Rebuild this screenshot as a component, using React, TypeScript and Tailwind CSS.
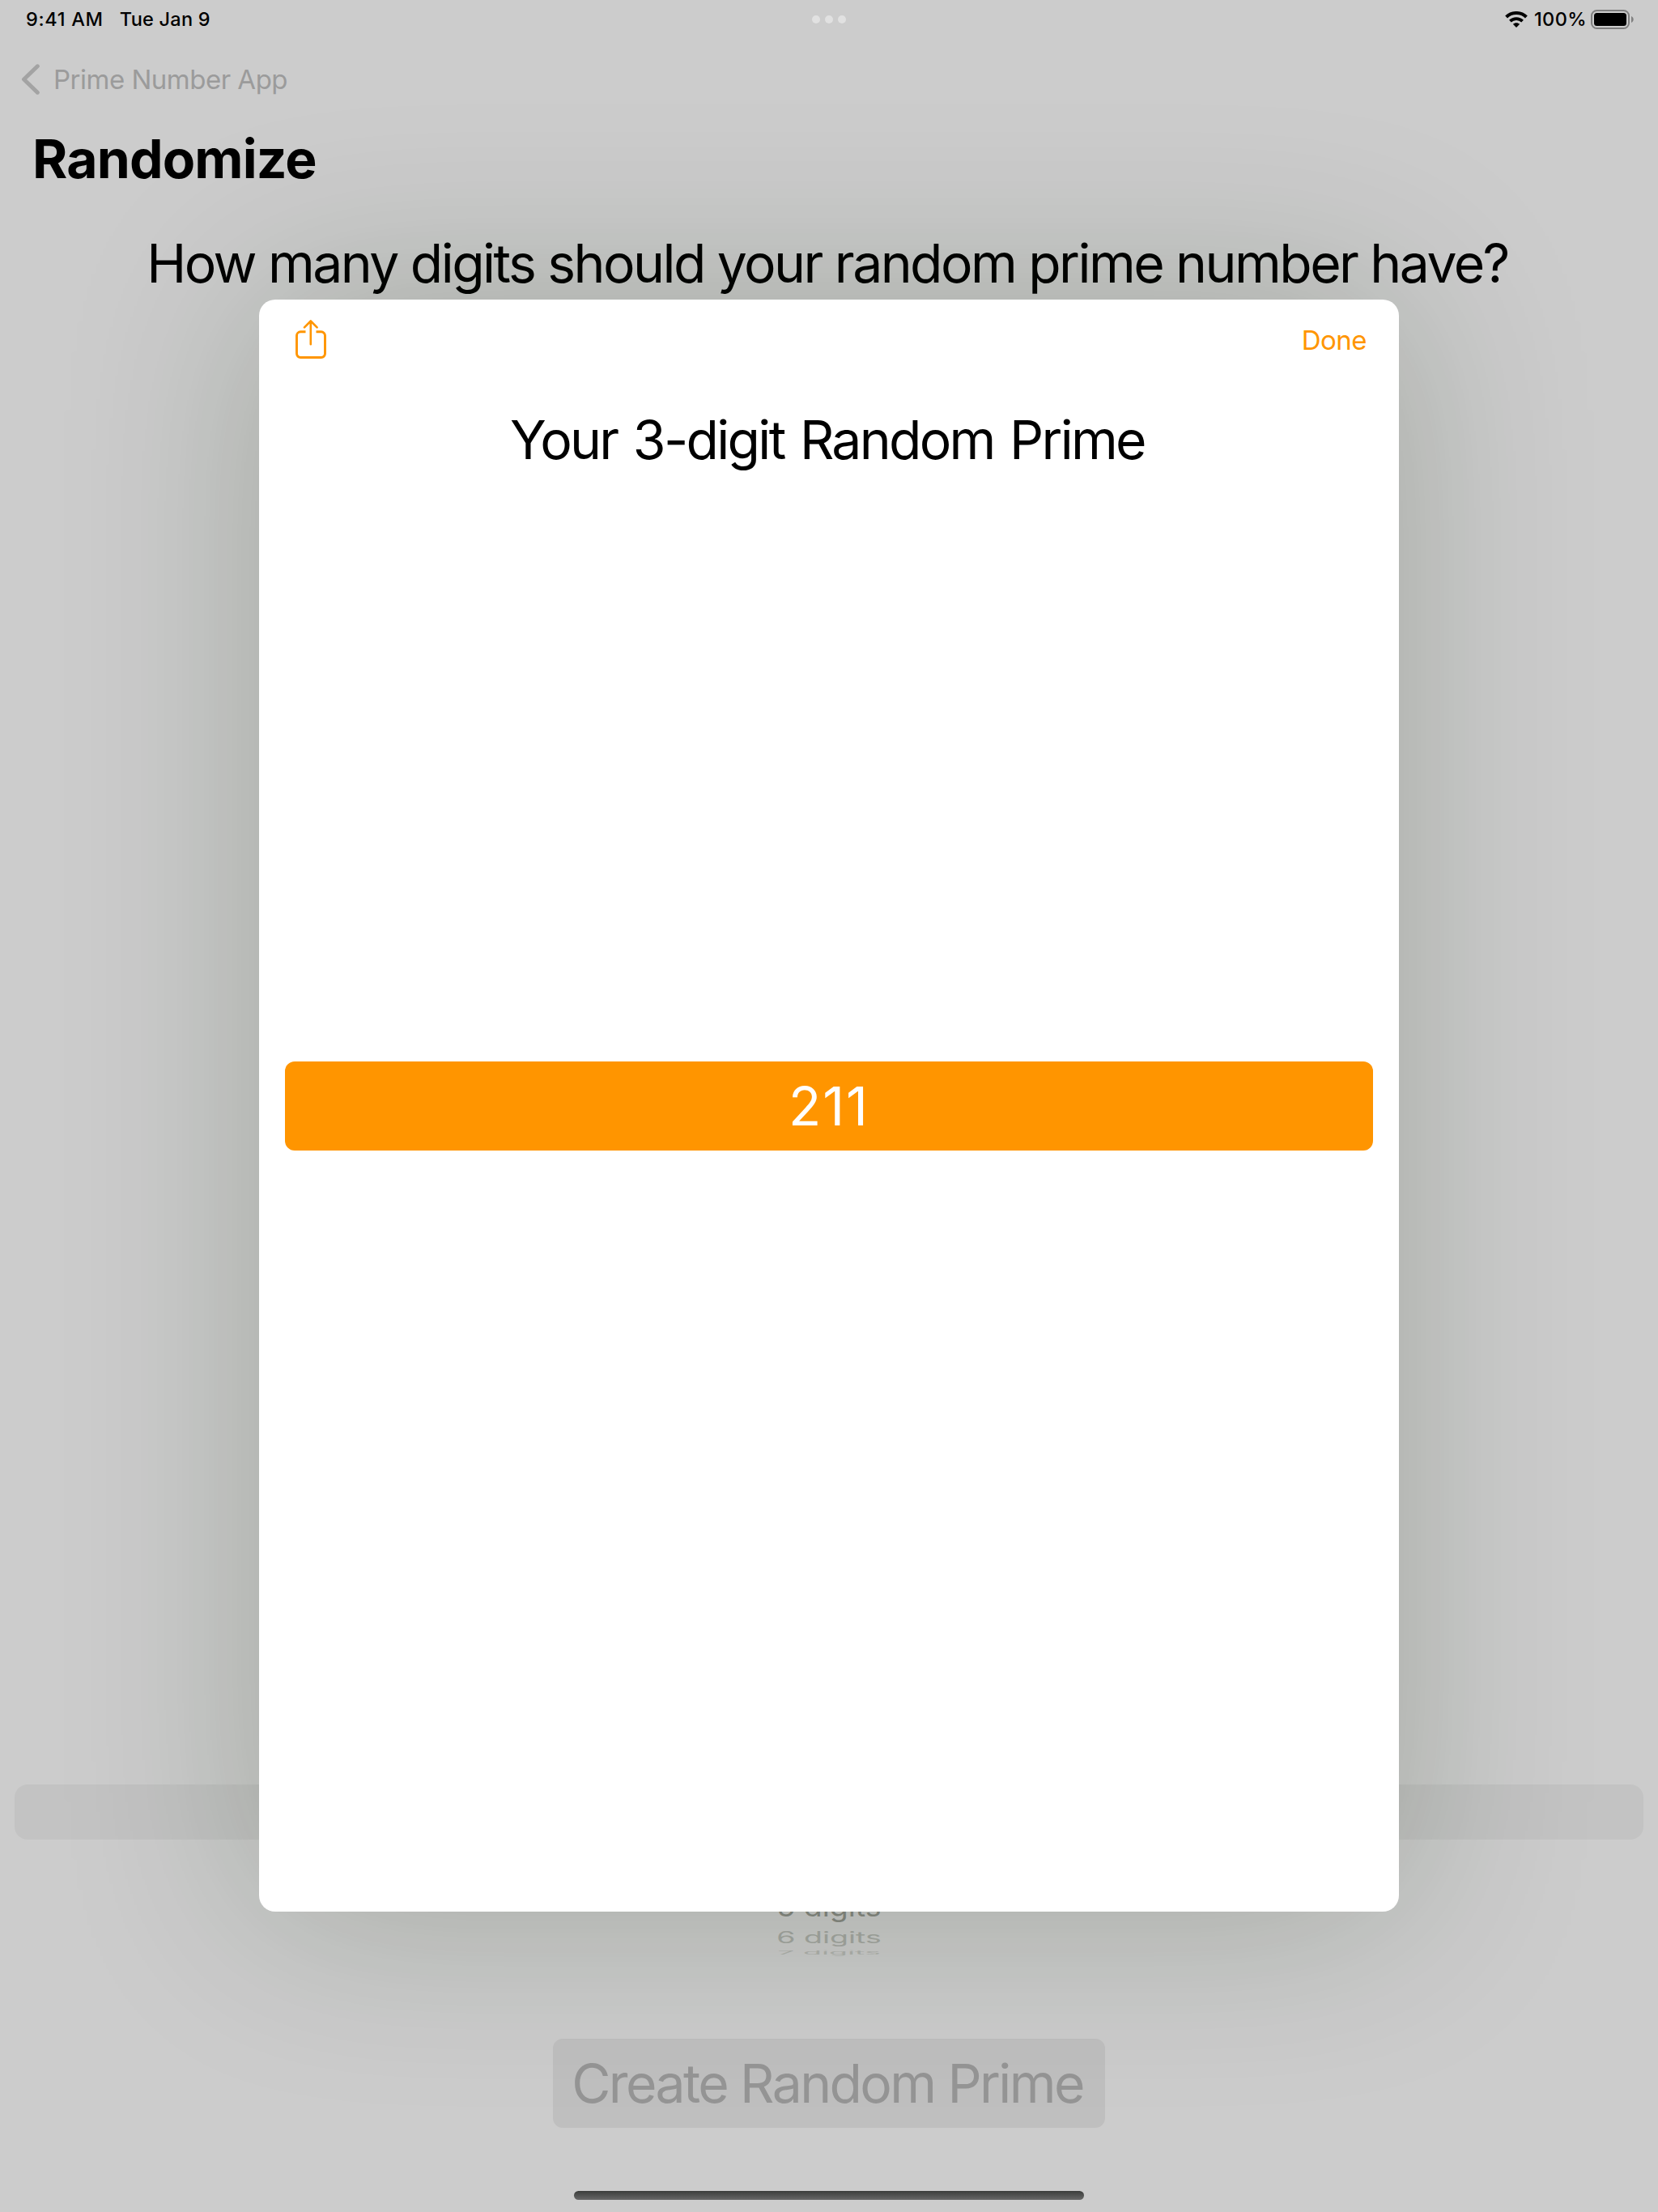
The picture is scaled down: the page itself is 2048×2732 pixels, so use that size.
function StatusBar() {
  return (
    <div className="grid h-[47px] grid-cols-3 items-center px-[30px] text-[23.5px] font-medium leading-none">
      <div className="flex items-center gap-[20px] pl-[2px]">
        <span className="tracking-[0.7px]">9:41 AM</span>
        <span className="tracking-[0.25px]">Tue Jan 9</span>
      </div>
      <div className="flex justify-center gap-[6px]">
        <i className="size-[10px] rounded-full bg-[#e1e1e1]" />
        <i className="size-[10px] rounded-full bg-[#e1e1e1]" />
        <i className="size-[10px] rounded-full bg-[#e1e1e1]" />
      </div>
      <div className="flex items-center justify-end">
        <svg width="28" height="20" viewBox="0 0 28 20" className="mr-[8px]">
          <path d="M1.6 7C8.3 0.3 19.7 0.3 26.4 7" fill="none" stroke="#000" strokeWidth="4" />
          <path d="M6.4 12.1C10.6 8 17.4 8 21.6 12.1" fill="none" stroke="#000" strokeWidth="3.8" />
          <path d="M14 20l-4.2-4.2c2.3-2.1 6.1-2.1 8.4 0z" />
        </svg>
        <span className="tracking-[0.4px]">100%</span>
        <svg width="53" height="24" viewBox="0 0 53 24" className="ml-[5px]">
          <rect x="1" y="1" width="46" height="22" rx="6.5" fill="none" stroke="#7f7f7f" strokeWidth="2" />
          <rect x="4" y="4" width="40" height="16" rx="3.5" />
          <path d="M50 8c3.6 1.4 3.6 6.6 0 8z" fill="#7f7f7f" />
        </svg>
      </div>
    </div>
  );
}

function ResultSheet() {
  return (
    <section className="absolute left-[320px] top-[370px] flex h-[1991px] w-[1408px] flex-col rounded-[20px] bg-white shadow-[0_0_240px_rgba(12,38,6,0.22)]">
      <header className="flex h-[100px] items-center justify-between pl-[45px] pr-[40px] text-[#ff9500]">
        <svg width="38" height="48" viewBox="0 0 38 48" className="mb-[2px]" fill="none" stroke="currentColor" strokeWidth="2.9" strokeLinecap="round" strokeLinejoin="round">
          <path d="M12.5 14.8H6.2a4.7 4.7 0 0 0-4.7 4.7v22.3a4.7 4.7 0 0 0 4.7 4.7h25.6a4.7 4.7 0 0 0 4.7-4.7V19.5a4.7 4.7 0 0 0-4.7-4.7h-6.3" strokeLinecap="butt" />
          <path d="M18.8 1.8v28.4M11 9.3l7.8-7.8 7.8 7.8" strokeWidth="2.6" />
        </svg>
        <button className="text-[33px] leading-none tracking-[-0.5px]">Done</button>
      </header>
      <h2 className="flex h-[146px] items-center justify-center whitespace-nowrap pr-[4px] text-[66px] leading-none tracking-[-2.7px] [word-spacing:3.5px]">Your 3-digit Random Prime</h2>
      <div className="mx-[32px] mt-[695px] flex h-[110px] items-center justify-center rounded-[12px] bg-[#ff9500] text-[66px] leading-none tracking-[2px] text-white">
        <span>211</span>
      </div>
    </section>
  );
}

export default function App() {
  return (
    <main className="relative flex h-[2732px] w-[2048px] flex-col overflow-hidden bg-[#cccccc] font-['Inter',sans-serif] text-black">
      <StatusBar />
      <nav className="flex h-[102px] items-center pl-[26px] text-[33px] leading-none tracking-[-0.5px] text-[#9b9b9b]">
        <svg width="24" height="38" viewBox="0 0 24 38" className="mr-[16px]" fill="none" stroke="#a3a3a3" strokeWidth="5" strokeLinecap="round" strokeLinejoin="round">
          <path d="M20.3 2.8L3.5 19l16.8 16.2" />
        </svg>
        <span>Prime Number App</span>
      </nav>
      <h1 className="flex h-[94px] items-center pl-[40px] text-[66px] font-bold leading-none tracking-[-0.85px]">Randomize</h1>
      <p className="flex h-[164px] items-center justify-center whitespace-nowrap pr-[4px] text-[66px] leading-none tracking-[-2.55px]">
        How many digits should your random prime number have?
      </p>
      <div className="mx-[18px] mt-[1797px] h-[68px] rounded-[16px] bg-[#c3c3c3]" />
      <div className="mt-[64px] flex flex-col items-center text-[37.5px] leading-none">
        <div className="flex h-[40px] items-center text-[#888a84]">
          <span className="scale-y-[0.84]">5 digits</span>
        </div>
        <div className="flex h-[34px] items-center text-[#a5a7a3]">
          <span className="scale-y-[0.52]">6 digits</span>
        </div>
        <div className="flex h-[3px] items-center text-[#b0b2ae]">
          <span className="scale-y-[0.17]">7 digits</span>
        </div>
      </div>
      <div className="mt-[105px] flex h-[110px] w-[682px] items-center justify-center self-center whitespace-nowrap rounded-[12px] bg-[#bfbfbf] pr-[4px] text-[66px] leading-none tracking-[-2.6px] text-[#959595]">
        <span>Create Random Prime</span>
      </div>
      <div className="mt-[78px] h-[11px] w-[630px] self-center rounded-full bg-linear-to-b from-[#3b3d3b] to-[#686868]" />
      <ResultSheet />
    </main>
  );
}
